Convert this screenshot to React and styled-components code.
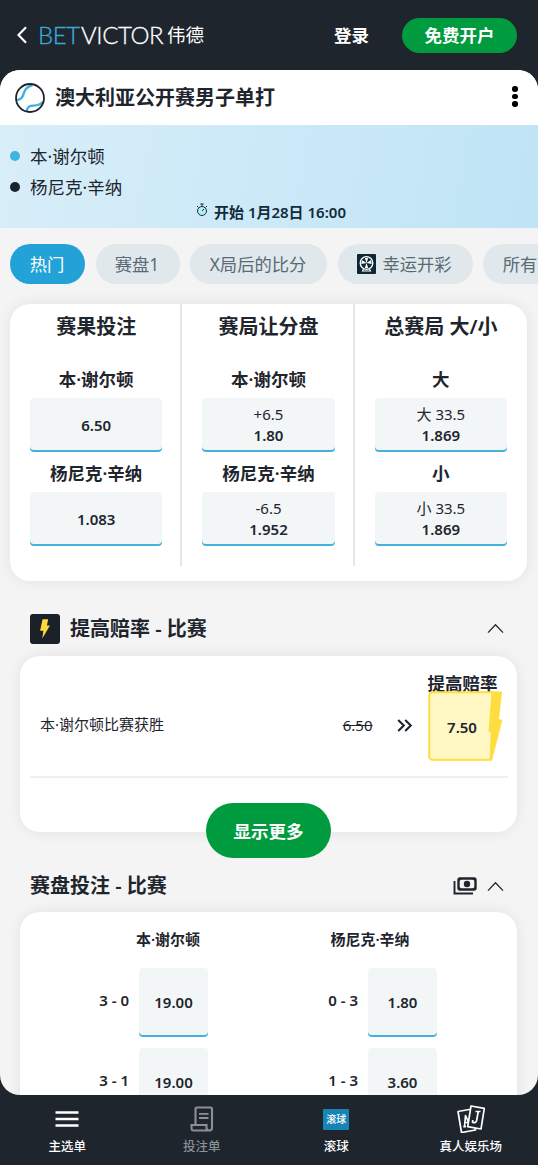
import styled, { createGlobalStyle, css } from "styled-components"

const GlobalStyle = createGlobalStyle`
    * {
        box-sizing: border-box;
    }

    body {
        margin: 0;
        background: #1e252d;
        color: #1e252d;
        font-family: "Noto Sans", "Noto Sans CJK SC", sans-serif;
        overflow: hidden;
    }

    button {
        font-family: inherit;
        border: none;
        padding: 0;
        cursor: pointer;
    }

    svg {
        display: block;
        flex: none;
    }
`

const mainMarkets = [
    {
        title: "赛果投注",
        picks: [
            { name: "本·谢尔顿", odds: "6.50" },
            { name: "杨尼克·辛纳", odds: "1.083" },
        ],
    },
    {
        title: "赛局让分盘",
        picks: [
            { name: "本·谢尔顿", line: "+6.5", odds: "1.80" },
            { name: "杨尼克·辛纳", line: "-6.5", odds: "1.952" },
        ],
    },
    {
        title: "总赛局 大/小",
        picks: [
            { name: "大", line: "大 33.5", odds: "1.869" },
            { name: "小", line: "小 33.5", odds: "1.869" },
        ],
    },
]

const setBetting = [
    {
        player: "本·谢尔顿",
        scores: [
            { score: "3 - 0", odds: "19.00" },
            { score: "3 - 1", odds: "19.00" },
        ],
    },
    {
        player: "杨尼克·辛纳",
        scores: [
            { score: "0 - 3", odds: "1.80" },
            { score: "1 - 3", odds: "3.60" },
        ],
    },
]

function ChevronUp() {
    return (
        <svg width="17" height="11" viewBox="0 0 17 11" fill="none" stroke="#1e252d" strokeWidth="1.3">
            <path d="M1 9.6 8.5 1.8 16 9.6" />
        </svg>
    )
}

function BackIcon() {
    return (
        <svg width="10" height="18" viewBox="0 0 10 18" fill="none" stroke="#fff" strokeWidth="2.2">
            <path d="M9 1.2 1.5 9 9 16.8" />
        </svg>
    )
}

function TennisBall() {
    return (
        <svg width="30" height="30" viewBox="0 0 30 30" fill="none">
            <path d="M2 17C12 15.500 5 5.500 17.500 2" stroke="#3fb0e0" strokeWidth="2.4" />
            <path d="M11.500 28C14 18.500 21 26.500 28.500 18.500" stroke="#3fb0e0" strokeWidth="2.4" />
            <circle cx="15" cy="15" r="14" stroke="#1e252d" strokeWidth="1.8" />
        </svg>
    )
}

function Stopwatch() {
    return (
        <svg width="12" height="14" viewBox="0 0 12 14" fill="none" stroke="#17303f" strokeWidth="1">
            <circle cx="6" cy="8" r="4.5" fill="#b5ecf5" />
            <path d="M6 8 8 6M4.3 1H7.7M6 1V3.5M1 3 2.5 4.5M11 3 9.5 4.5" />
        </svg>
    )
}

function LuckyWheel() {
    return (
        <svg width="19" height="20" viewBox="0 0 19 20" fill="none">
            <rect width="19" height="20" rx="1" fill="#0d2838" />
            <circle cx="9.5" cy="9" r="6.3" stroke="#fff" strokeWidth="1.3" />
            <path d="M9.5 9 7.8 4h3.4zM9.5 9l1.7 5H7.8zM9.5 9l-4.6-2.9-.6 4zM9.5 9l4.6-2.9.6 4z" fill="#fff" />
            <path d="M6.5 15 5.5 17H13.5L12.5 15" stroke="#fff" strokeWidth="1.1" />
        </svg>
    )
}

function BoltBadge() {
    return (
        <svg width="30" height="30" viewBox="0 0 30 30">
            <rect width="30" height="30" rx="3" fill="#1a2129" />
            <path d="M12.6 5.2H18.2L16.9 11.6H19.9L12.3 24.6 13.4 16.8H10.1Z" fill="#ffd83a" />
        </svg>
    )
}

function DoubleChevron() {
    return (
        <svg width="15" height="13" viewBox="0 0 15 13" fill="none" stroke="#1e252d" strokeWidth="2.1">
            <path d="M1.2 1 6.8 6.5 1.2 12M8.2 1 13.8 6.5 8.2 12" />
        </svg>
    )
}

function CashIcon() {
    return (
        <svg width="24" height="18" viewBox="0 0 24 18" fill="none">
            <rect x="5.5" y="1.5" width="17" height="11" rx="1.5" stroke="#1e252d" strokeWidth="2.4" />
            <path d="M5 1h5L5 5zM18 1h5v4zM5 9v4h5zM23 9v4h-5z" fill="#1e252d" />
            <circle cx="14" cy="7" r="3.2" fill="#1e252d" />
            <path d="M1.5 4V16.5H20" stroke="#1e252d" strokeWidth="1.9" />
        </svg>
    )
}

function BoostShape() {
    return (
        <svg width="76" height="71" viewBox="0 0 76 71">
            <path d="M5 1.2H65L63 68.8H5Q1.2 68.8 1.2 65V5Q1.2 1.2 5 1.2Z" fill="#fff8c4" stroke="#ffdd3f" strokeWidth="2" />
            <path d="M63.5 .5H74L71 28.5H74.5L64 69.500 61.5 69 63 41H60.5Z" fill="#ffdd3f" />
        </svg>
    )
}

function MenuIcon() {
    return (
        <svg width="24" height="18" viewBox="0 0 24 18" stroke="#fff" strokeWidth="2.4">
            <path d="M.5 2.5H23.5M.5 9H23.5M.5 15.5H23.5" />
        </svg>
    )
}

function SlipIcon() {
    return (
        <svg width="24" height="26" viewBox="0 0 24 26" fill="none" stroke="#8b9097" strokeWidth="2.1">
            <path d="M5.5 18V3Q5.5 1.5 7 1.5H20.5Q22 1.5 22 3V22Q22 24.5 19.5 24.5H4Q1.5 24.5 1.5 22V19H16.5V22Q16.5 24.5 19.5 24.5" />
            <path d="M9 7.8H18.5M9 12H18.5" strokeWidth="1.8" />
        </svg>
    )
}

function CardsIcon() {
    return (
        <svg width="28" height="28" viewBox="0 0 28 28" fill="#1e252d" stroke="#fff" strokeWidth="1.7" strokeLinejoin="round">
            <path d="M1 6.5 15 4 18.5 25 4.5 27.5Z" />
            <path d="M7.5 21.5 8.5 10.5 13 20.5M6.3 21.7H9M8 17.5H12" fill="none" />
            <path d="M14 1 27.3 3.3 24 24 10.7 21.7Z" />
            <path d="M18.5 6.5H23.5M21.3 6.5 19.6 15.5Q18.7 18.8 15.5 17.2L15.8 15" fill="none" />
        </svg>
    )
}

function Odds({ line, value }) {
    return (
        <OddsButton>
            {line && <small>{line}</small>}
            <b>{value}</b>
        </OddsButton>
    )
}

export default function App() {
    return (
        <>
            <GlobalStyle />
            <Page>
                <TopBar>
                    <BackIcon />
                    <Logo>
                        <LogoWord $blue $width="43px">BET</LogoWord>
                        <LogoWord $width="86px">VICTOR</LogoWord>
                        <LogoChinese>伟德</LogoChinese>
                    </Logo>
                    <Login>登录</Login>
                    <Register>免费开户</Register>
                </TopBar>

                <Sheet>
                    <TitleBar>
                        <TennisBall />
                        <h1>澳大利亚公开赛男子单打</h1>
                        <Dots><i /><i /><i /></Dots>
                    </TitleBar>

                    <Scoreboard>
                        <Player $color="#3fb3e2">本·谢尔顿</Player>
                        <Player $color="#17232d">杨尼克·辛纳</Player>
                        <StartTime><Stopwatch />开始 1月28日 16:00</StartTime>
                    </Scoreboard>

                    <Tabs>
                        <Tab $active $width="75px">热门</Tab>
                        <Tab $width="84px">赛盘1</Tab>
                        <Tab $width="137px">X局后的比分</Tab>
                        <Tab $width="135px"><LuckyWheel />幸运开彩</Tab>
                        <Tab $width="75px">所有</Tab>
                    </Tabs>

                    <MainCard>
                        {mainMarkets.map((market) => (
                            <Market key={market.title}>
                                <h2>{market.title}</h2>
                                {market.picks.map((pick) => (
                                    <Pick key={pick.name}>
                                        <h3>{pick.name}</h3>
                                        <Odds line={pick.line} value={pick.odds} />
                                    </Pick>
                                ))}
                            </Market>
                        ))}
                    </MainCard>

                    <SectionHead $height="75px" $top="20px">
                        <BoltBadge />
                        <h2>提高赔率 - 比赛</h2>
                        <ChevronUp />
                    </SectionHead>

                    <BoostCard>
                        <BoostRow>
                            <BoostName>本·谢尔顿比赛获胜</BoostName>
                            <OldOdds>6.50</OldOdds>
                            <DoubleChevron />
                            <BoostColumn>
                                <BoostLabel>提高赔率</BoostLabel>
                                <BoostButton>
                                    <BoostShape />
                                    <b>7.50</b>
                                </BoostButton>
                            </BoostColumn>
                        </BoostRow>
                    </BoostCard>
                    <ShowMore>显示更多</ShowMore>

                    <SectionHead $height="54px" $top="2px">
                        <h2>赛盘投注 - 比赛</h2>
                        <CashIcon />
                        <ChevronUp />
                    </SectionHead>

                    <SetCard>
                        <SetPlayers>
                            {setBetting.map((column) => (
                                <h3 key={column.player}>{column.player}</h3>
                            ))}
                        </SetPlayers>
                        <SetColumns>
                            {setBetting.map((column) => (
                                <SetColumn key={column.player}>
                                    {column.scores.map((item) => (
                                        <ScoreRow key={item.score}>
                                            <span>{item.score}</span>
                                            <OddsButton $tall><b>{item.odds}</b></OddsButton>
                                        </ScoreRow>
                                    ))}
                                </SetColumn>
                            ))}
                        </SetColumns>
                    </SetCard>
                </Sheet>

                <BottomNav>
                    <NavItem><NavIcon><MenuIcon /></NavIcon>主选单</NavItem>
                    <NavItem $muted><NavIcon><SlipIcon /></NavIcon>投注单</NavItem>
                    <NavItem><NavIcon><LiveBadge>滚球</LiveBadge></NavIcon>滚球</NavItem>
                    <NavItem><NavIcon><CardsIcon /></NavIcon>真人娱乐场</NavItem>
                </BottomNav>
            </Page>
        </>
    )
}

const Page = styled.div`
    width: 538px;
    height: 1165px;
    display: flex;
    flex-direction: column;
    white-space: nowrap;
`

const TopBar = styled.header`
    height: 70px;
    flex: none;
    display: flex;
    align-items: center;
    padding: 0 21px 0 17px;
    color: #fff;
`

const Logo = styled.div`
    display: flex;
    align-items: center;
    margin-left: 11px;
    flex: 1;
`

const LogoWord = styled.span`
    width: ${(p) => p.$width};
    color: ${(p) => (p.$blue ? "#3aa9dc" : "#fff")};
    font-family: Lato, sans-serif;
    font-size: 24px;
    font-weight: 300;
    line-height: 30px;
    letter-spacing: -0.4px;
    -webkit-text-stroke: 0.3px;
`

const LogoChinese = styled.span`
    font-size: 18.5px;
    line-height: 30px;
`

const Login = styled.button`
    background: none;
    color: #fff;
    font-size: 17.5px;
    font-weight: 700;
    margin: -2px 33px 0 0;
`

const Register = styled.button`
    width: 115px;
    height: 35px;
    padding-bottom: 2px;
    border-radius: 18px;
    background: #009b3e;
    color: #fff;
    font-size: 17.5px;
    font-weight: 700;
`

const Sheet = styled.main`
    height: 1025px;
    flex: none;
    background: #f4f4f4;
    border-radius: 20px;
    overflow: hidden;
    display: flex;
    flex-direction: column;

    > * {
        flex: none;
    }

    h1, h2, h3 {
        margin: 0;
        font-weight: 600;
    }
`

const TitleBar = styled.div`
    height: 55px;
    background: #fff;
    display: flex;
    align-items: center;
    padding: 0 20.5px 0 15px;

    h1 {
        flex: 1;
        margin-left: 10px;
        font-size: 20px;
        line-height: 28px;
    }
`

const Dots = styled.div`
    display: flex;
    flex-direction: column;
    gap: 2px;
    margin-top: -2px;

    i {
        width: 5.5px;
        height: 5.5px;
        border-radius: 50%;
        background: #000;
    }
`

const Scoreboard = styled.div`
    height: 103px;
    padding-top: 15px;
    background: linear-gradient(100deg, #d8eef9, #bfe4f6);
`

const Player = styled.div`
    display: flex;
    align-items: center;
    height: 31px;
    padding-left: 10px;
    font-size: 17.5px;

    &::before {
        content: "";
        width: 10px;
        height: 10px;
        margin-right: 10px;
        border-radius: 50%;
        background: ${(p) => p.$color};
    }
`

const StartTime = styled.div`
    display: flex;
    align-items: center;
    justify-content: center;
    gap: 6px;
    height: 18px;
    padding-left: 4px;
    font-size: 15px;
    font-weight: 600;
    color: #122b3a;

    svg {
        margin-top: -3px;
    }
`

const Tabs = styled.nav`
    display: flex;
    gap: 10.5px;
    padding: 16px 0 20px 10px;
    overflow: hidden;
`

const Tab = styled.button`
    width: ${(p) => p.$width};
    height: 40px;
    flex: none;
    display: flex;
    align-items: center;
    justify-content: center;
    gap: 6px;
    padding: 0 1px 1px 0;
    border-radius: 20px;
    font-size: 17.3px;
    background: ${(p) => (p.$active ? "#22a2d6" : "#e0e8ec")};
    color: ${(p) => (p.$active ? "#fff" : "#596a75")};
`

const cardStyle = css`
    background: #fff;
    border-radius: 20px;
    box-shadow: 0 0 14px rgba(0, 0, 0, 0.08);
`

const MainCard = styled.section`
    ${cardStyle}
    height: 277px;
    margin: 0 11px 0 10px;
    padding-bottom: 15px;
    display: grid;
    grid-template-columns: repeat(3, 1fr);
`

const Market = styled.div`
    padding: 5px 20px 0;
    text-align: center;

    &:not(:last-child) {
        border-right: 2px solid #e5e6e6;
        padding-right: 18px;
    }

    h2 {
        font-size: 20px;
        line-height: 35px;
        margin-bottom: 17px;
    }
`

const Pick = styled.div`
    h3 {
        font-size: 17.5px;
        line-height: 37px;
    }

    & + & {
        margin-top: 3px;
    }
`

const OddsButton = styled.button`
    width: ${(p) => (p.$tall ? "69px" : "100%")};
    height: ${(p) => (p.$tall ? "69px" : "54px")};
    display: flex;
    flex-direction: column;
    align-items: center;
    justify-content: center;
    background: #f2f6f7;
    border-radius: 4px;
    box-shadow: inset 0 -2px #46b1df;
    color: #1e252d;
    font-size: 15px;
    line-height: 21px;

    small {
        font-size: 15px;
    }

    b {
        font-weight: 600;
    }
`

const SectionHead = styled.div`
    height: ${(p) => p.$height};
    display: flex;
    align-items: center;
    gap: 10px;
    padding: ${(p) => p.$top} 34px 0 30px;

    h2 {
        flex: 1;
        font-size: 20px;
        line-height: 30px;
    }
`

const BoostCard = styled.section`
    ${cardStyle}
    height: 176px;
    margin: 0 21px 0 20px;
    padding: 0 9px 0 10px;
`

const BoostRow = styled.div`
    height: 122px;
    display: flex;
    align-items: center;
    padding: 18px 4.5px 0 10px;
    border-bottom: 2px solid #eeefef;
`

const BoostName = styled.span`
    flex: 1;
    margin-top: -3px;
    font-size: 15px;
`

const OldOdds = styled.span`
    font-size: 15px;
    text-decoration: line-through;
    margin-right: 24px;
`

const BoostColumn = styled.div`
    width: 76px;
    margin-left: 16px;
    align-self: flex-start;
`

const BoostLabel = styled.div`
    height: 17px;
    font-size: 17.5px;
    line-height: 19px;
    font-weight: 600;
`

const BoostButton = styled.button`
    display: grid;
    background: none;
    color: #1e252d;

    > * {
        grid-area: 1 / 1;
    }

    b {
        align-self: center;
        padding-right: 7px;
        font-size: 15px;
        font-weight: 600;
    }
`

const ShowMore = styled.button`
    align-self: center;
    width: 125px;
    height: 55px;
    margin: -29px 1px 0 0;
    border-radius: 28px;
    background: #009b3e;
    color: #fff;
    font-size: 17.5px;
    font-weight: 700;
`

const SetCard = styled.section`
    ${cardStyle}
    height: 260px;
    margin: 0 21px 0 20px;
`

const SetPlayers = styled.div`
    display: flex;
    padding-left: 47px;

    h3 {
        width: 202px;
        font-size: 15px;
        line-height: 54px;
        height: 56px;
        text-align: center;
    }
`

const SetColumns = styled.div`
    display: flex;
    gap: 110px;
    padding-left: 69px;
`

const SetColumn = styled.div`
    width: 119px;
`

const ScoreRow = styled.div`
    display: flex;
    align-items: center;
    justify-content: flex-end;
    gap: 10px;
    margin-bottom: 11px;

    span {
        font-size: 15px;
        font-weight: 600;
        margin-top: -6px;
    }
`

const BottomNav = styled.footer`
    height: 70px;
    flex: none;
    display: grid;
    grid-template-columns: repeat(4, 1fr);
`

const NavItem = styled.div`
    display: flex;
    flex-direction: column;
    align-items: center;
    padding-top: 8px;
    font-size: 12.5px;
    font-weight: 500;
    line-height: 24px;
    color: ${(p) => (p.$muted ? "#8b9097" : "#fff")};
`

const NavIcon = styled.div`
    height: 32px;
    display: flex;
    align-items: center;
`

const LiveBadge = styled.div`
    width: 26px;
    height: 21px;
    border-radius: 1px;
    background: #1784b5;
    font-size: 10px;
    line-height: 20px;
    text-align: center;
`
